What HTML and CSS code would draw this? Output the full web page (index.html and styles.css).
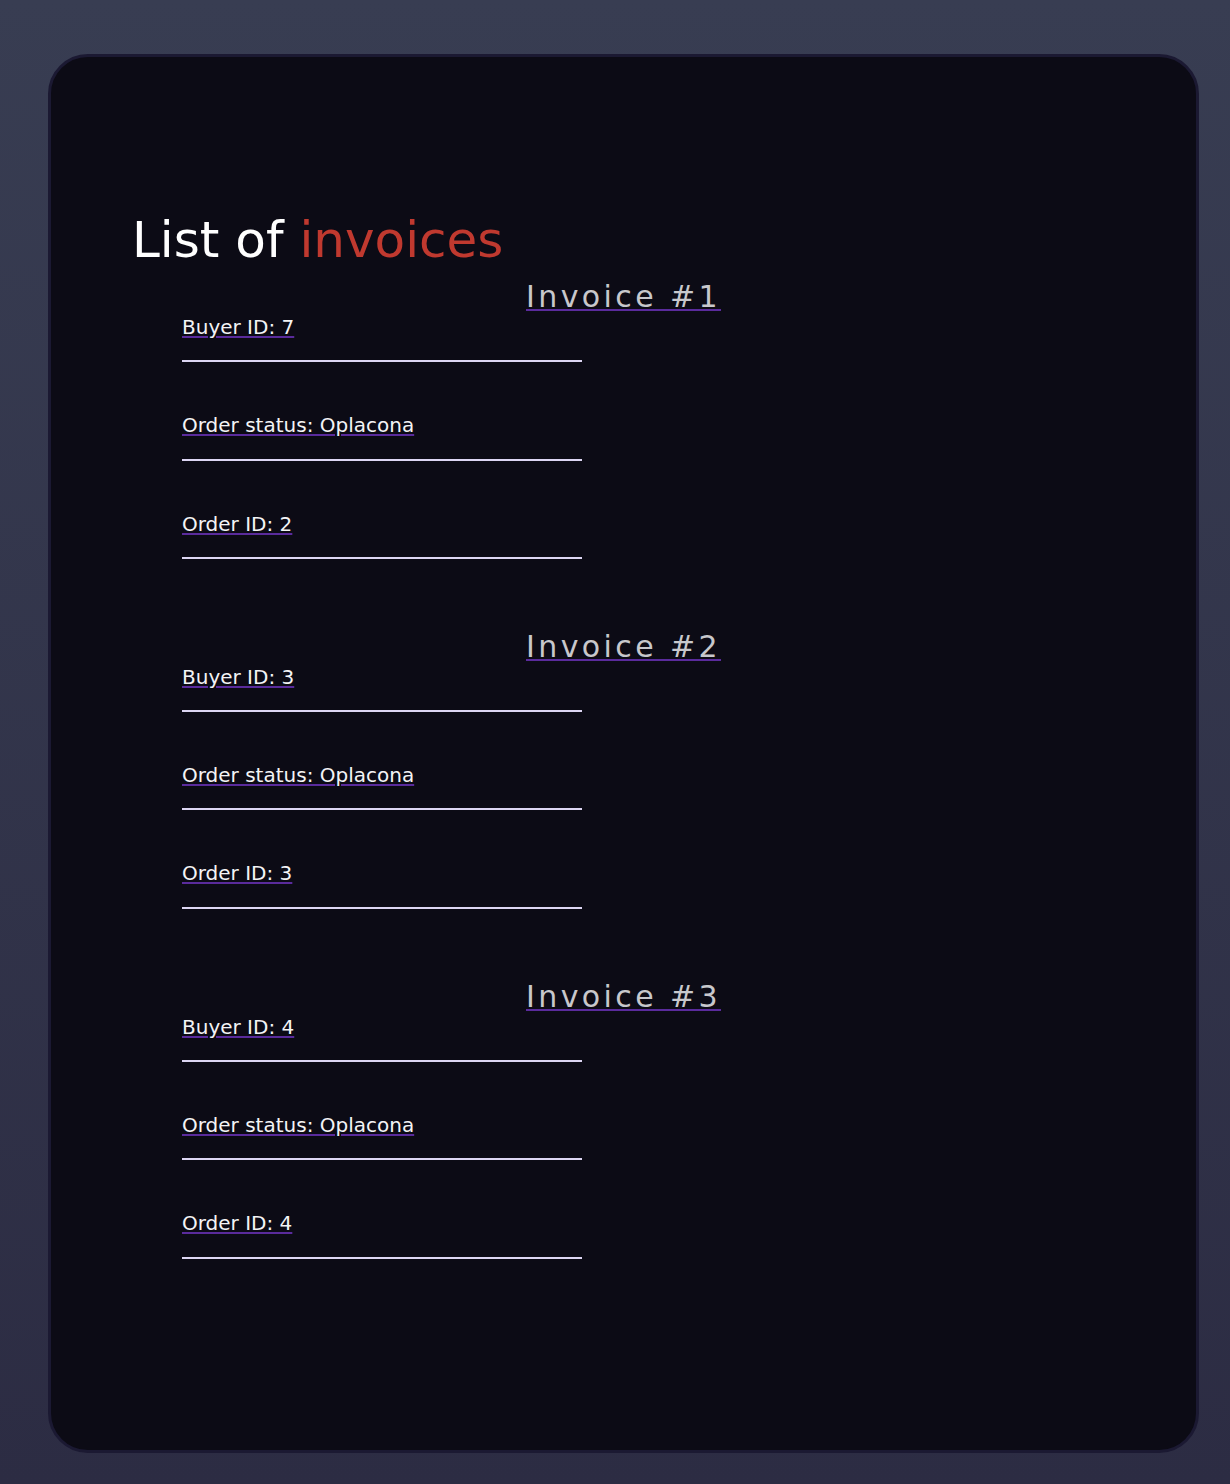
FILE: index.html
```html
<!DOCTYPE html>
<html lang="en">
<head>
<meta charset="utf-8">
<title>List of invoices</title>
<link rel="stylesheet" href="styles.css">
</head>
<body>
<div class="page">
  <main class="card">
    <h1 class="title">List of <span class="accent">invoices</span></h1>

    <section class="invoice">
      <h2 class="invoice-title"><a href="#">Invoice #1</a></h2>
      <ul class="fields">
        <li class="field"><a href="#">Buyer ID: 7</a><div class="rule"></div></li>
        <li class="field"><a href="#">Order status: Oplacona</a><div class="rule"></div></li>
        <li class="field"><a href="#">Order ID: 2</a><div class="rule"></div></li>
      </ul>
    </section>

    <section class="invoice">
      <h2 class="invoice-title"><a href="#">Invoice #2</a></h2>
      <ul class="fields">
        <li class="field"><a href="#">Buyer ID: 3</a><div class="rule"></div></li>
        <li class="field"><a href="#">Order status: Oplacona</a><div class="rule"></div></li>
        <li class="field"><a href="#">Order ID: 3</a><div class="rule"></div></li>
      </ul>
    </section>

    <section class="invoice">
      <h2 class="invoice-title"><a href="#">Invoice #3</a></h2>
      <ul class="fields">
        <li class="field"><a href="#">Buyer ID: 4</a><div class="rule"></div></li>
        <li class="field"><a href="#">Order status: Oplacona</a><div class="rule"></div></li>
        <li class="field"><a href="#">Order ID: 4</a><div class="rule"></div></li>
      </ul>
    </section>
  </main>
</div>
</body>
</html>
```

FILE: styles.css
```css
* { box-sizing: border-box; }

html, body {
  margin: 0;
  padding: 0;
  min-height: 100%;
}

body {
  background: linear-gradient(to bottom, #383d52 0%, #2c2c43 100%);
  min-height: 1484px;
  font-family: "DejaVu Sans", "Liberation Sans", sans-serif;
  color: #f2f2f2;
}

.page {
  padding: 54px 31px 31px 48px;
}

.card {
  background: #0c0b15;
  border: 3px solid #1b1932;
  border-radius: 40px;
  min-height: 1399px;
  padding: 154px 77px 100px 77px;
}

.title {
  margin: 0;
  padding-left: 4px;
  font-size: 50px;
  font-weight: normal;
  line-height: 58px;
  color: #ffffff;
}

.accent {
  color: #c0392f;
}

.invoice {
  margin-top: 10px;
}

.invoice + .invoice {
  margin-top: 70px;
}

.invoice-title {
  margin: 0;
  text-align: center;
  font-size: 30px;
  font-weight: normal;
  line-height: 35px;
  letter-spacing: 3.4px;
}

.invoice-title a {
  color: #c8c8cc;
  text-decoration: underline;
  text-decoration-color: #5a2b9c;
  text-decoration-thickness: 2px;
  text-underline-offset: 2px;
}

.fields {
  list-style: none;
  margin: 2px 0 0 54px;
  padding: 0;
}

.field {
  font-size: 20px;
  line-height: 23.3px;
  margin-bottom: 52px;
}

.field:last-child {
  margin-bottom: 0;
}

.field a {
  color: #f4f4f6;
  text-decoration: underline;
  text-decoration-color: #5a2b9c;
  text-decoration-thickness: 2px;
  text-underline-offset: 2px;
}

.rule {
  width: 400px;
  height: 2px;
  margin-top: 21px;
  background: #ddd6f3;
}
```
